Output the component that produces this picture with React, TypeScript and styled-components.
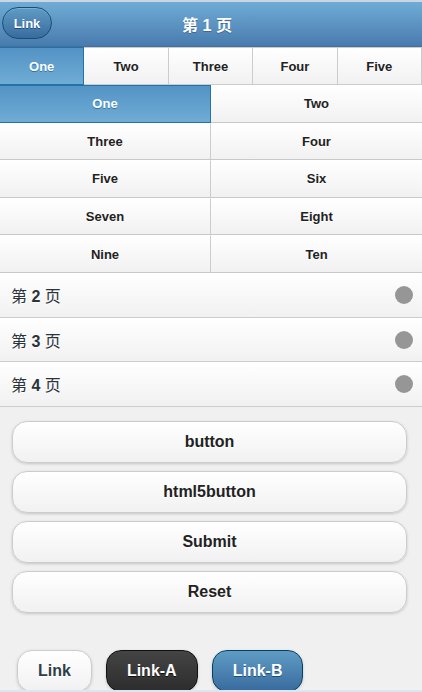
import React from "react"
import styled, { createGlobalStyle, css } from 'styled-components'

const GlobalStyle = createGlobalStyle`
  html, body {
    margin: 0;
    padding: 0;
    background: #f0f0f0;
    font-family: "Liberation Sans", "Noto Sans CJK SC", Arial, sans-serif;
  }
  * { box-sizing: border-box; }
`

const navItems = ['One', 'Two', 'Three', 'Four', 'Five']
const gridItems = ['One', 'Two', 'Three', 'Four', 'Five', 'Six', 'Seven', 'Eight', 'Nine', 'Ten']
const pages = [2, 3, 4]
const buttons = ['button', 'html5button', 'Submit', 'Reset']

const App = () => (
  <Page>
    <GlobalStyle />
    <Header>
      <HeaderButton>Link</HeaderButton>
      <Title>第 1 页</Title>
    </Header>

    <NavBar>
      {navItems.map((n, i) => (
        <NavCell key={n} $active={i === 0}>{n}</NavCell>
      ))}
    </NavBar>

    <Grid>
      {gridItems.map((n, i) => (
        <GridCell key={n} $active={i === 0} $left={i % 2 === 0}>{n}</GridCell>
      ))}
    </Grid>

    {pages.map(p => (
      <Collapsible key={p}>
        <CollapsibleTitle>第 <b>{p}</b> 页</CollapsibleTitle>
        <Disc />
      </Collapsible>
    ))}

    <Content>
      {buttons.map(b => <BigButton key={b}>{b}</BigButton>)}
      <LinkRow>
        <InlineButton $variant="c">Link</InlineButton>
        <InlineButton $variant="a">Link-A</InlineButton>
        <InlineButton $variant="b">Link-B</InlineButton>
      </LinkRow>
    </Content>

    <Footer />
  </Page>
)

export default App


const Page = styled.div`
  width: 422px;
  min-height: 692px;
`
const Header = styled.header`
  position: relative;
  height: 47px;
  border-top: 2px solid #c9d6e3;
  border-bottom: 1px solid #456f9a;
  background: linear-gradient(#6facd5, #497bae);
  display: flex;
  align-items: center;
  justify-content: center;
`
const Title = styled.h1`
  margin: 0 8px 0 0;
  font-size: 16px;
  font-weight: bold;
  color: #fff;
  text-shadow: 0 1px 0 #3e6790;
`
const HeaderButton = styled.a`
  position: absolute;
  left: 2px;
  top: 5px;
  height: 32px;
  width: 50px;
  display: flex;
  align-items: center;
  justify-content: center;
  border: 1px solid #145072;
  border-radius: 16px;
  background: linear-gradient(#5f9cc5, #396b9e);
  color: #fff;
  font-size: 13px;
  font-weight: bold;
  text-shadow: 0 1px 0 #194b7e;
  box-shadow: inset 0 1px 0 rgba(255,255,255,.2);
`
const NavBar = styled.nav`
  display: grid;
  grid-template-columns: repeat(5, 1fr);
  height: 38px;
`
const activeBlue = css`
  background: linear-gradient(#5393c5, #6facd5);
  border-color: #2373a5;
  color: #fff;
  text-shadow: 0 1px 0 #3373a5;
`
const NavCell = styled.div<{ $active?: boolean }>`
  display: flex;
  align-items: center;
  justify-content: center;
  border-top: 1px solid #ccc;
  border-bottom: 1px solid #ccc;
  border-right: 1px solid #ccc;
  background: linear-gradient(#fff, #f1f1f1);
  font-size: 13px;
  font-weight: bold;
  color: #222;
  text-shadow: 0 1px 0 #fff;
  ${p => p.$active && activeBlue}
`
const Grid = styled.div`
  display: grid;
  grid-template-columns: 1fr 1fr;
  grid-auto-rows: 37.6px;
`
const GridCell = styled.div<{ $active?: boolean, $left?: boolean }>`
  display: flex;
  align-items: center;
  justify-content: center;
  border-top: 1px solid #fff;
  border-bottom: 1px solid #c8c8c8;
  border-right: ${p => p.$left ? '1px solid #ccc' : 'none'};
  background: linear-gradient(#fff, #f1f1f1);
  font-size: 13px;
  font-weight: bold;
  color: #222;
  text-shadow: 0 1px 0 #fff;
  ${p => p.$active && activeBlue}
  ${p => p.$active && css`border-top: 1px solid #2373a5; border-bottom-color: #2373a5;`}
`
const Collapsible = styled.div`
  height: 44.7px;
  display: flex;
  align-items: center;
  justify-content: space-between;
  padding: 0 9px 0 11px;
  border-bottom: 1px solid #ccc;
  background: linear-gradient(#fff, #f1f1f1);
`
const CollapsibleTitle = styled.h3`
  margin: 0;
  font-size: 16px;
  font-weight: normal;
  color: #2a343a;
  text-shadow: 0 1px 0 #fff;

  & > b {
    font-weight: bold;
  }
`
const Disc = styled.span`
  width: 18px;
  height: 18px;
  border-radius: 50%;
  background: #969696;
`
const Content = styled.div`
  padding: 14px 15px 0 12px;
`
const BigButton = styled.button`
  display: block;
  width: 100%;
  height: 42px;
  margin: 0 0 8px;
  border: 1px solid #ccc;
  border-radius: 15px;
  background: linear-gradient(#fff, #f1f1f1);
  box-shadow: 0 1px 3px rgba(0,0,0,.18);
  font-family: inherit;
  font-size: 16px;
  font-weight: bold;
  color: #222;
  text-shadow: 0 1px 0 #fff;
`
const LinkRow = styled.div`
  display: flex;
  gap: 14px;
  margin-top: 37px;
  padding-left: 5px;
`
const variants = {
  c: css`
    border-color: #ccc;
    background: linear-gradient(#fff, #f1f1f1);
    color: #2f3e46;
    text-shadow: 0 1px 0 #fff;
  `,
  a: css`
    border-color: #111;
    background: linear-gradient(#444, #2d2d2d);
    color: #fff;
    text-shadow: 0 1px 0 #111;
  `,
  b: css`
    border-color: #044062;
    background: linear-gradient(#5f9cc5, #396b9e);
    color: #fff;
    text-shadow: 0 1px 0 #194b7e;
  `,
}
const InlineButton = styled.a<{ $variant: 'a' | 'b' | 'c' }>`
  display: flex;
  align-items: center;
  height: 42px;
  padding: 0 20px;
  border: 1px solid;
  border-radius: 15px;
  box-shadow: 0 1px 3px rgba(0,0,0,.18);
  font-size: 16px;
  font-weight: bold;
  ${p => variants[p.$variant]}
`
const Footer = styled.footer`
  position: fixed;
  left: 0;
  right: 0;
  bottom: 0;
  height: 2px;
  background: #dbe6f0;
`
